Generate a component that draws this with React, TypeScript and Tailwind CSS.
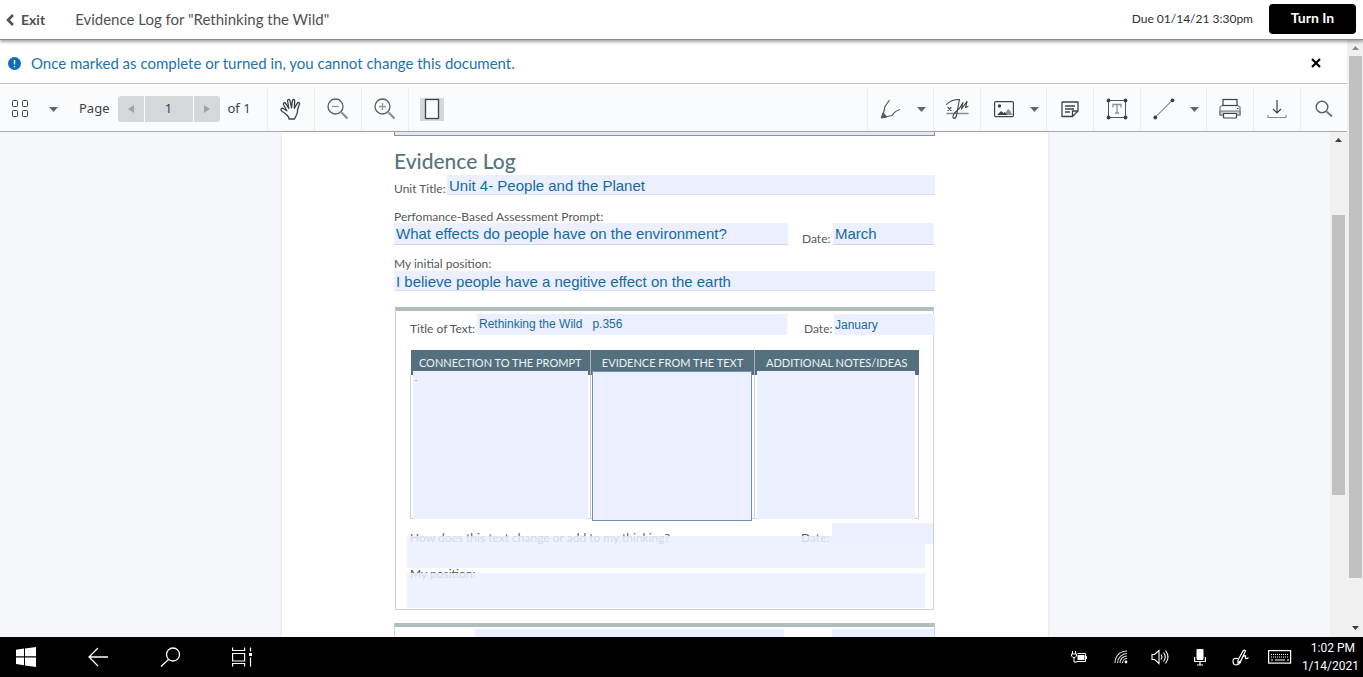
import { useState } from 'react';
import type { ReactNode } from 'react';

const columns = ['CONNECTION TO THE PROMPT', 'EVIDENCE FROM THE TEXT', 'ADDITIONAL NOTES/IDEAS'];

const columnWidths = ['w-[180px]', 'w-[164px]', 'w-[164px]'];

const boxStyles = [
  'ml-0.5 w-[175px] h-[148px] bg-[#ecf0fe]',
  'ml-px w-[160px] h-[150px] border border-[#6f8fb5] bg-[#ecf0fe]',
  'ml-0.5 w-[158px] h-[148px] bg-[#ecf0fe]',
];

const fieldBase = 'block min-w-0 rounded-none bg-[#ecf0fe] text-[#156aa3] outline-none font-["Liberation_Sans",Arial,sans-serif]';
const labelBase = 'shrink-0 whitespace-nowrap text-xs leading-3 text-[#55585a]';

function Tool({ label, children, menu = false }: { label: string; children: ReactNode; menu?: boolean }) {
  return (
    <div className={`flex h-full shrink-0 border-l border-[#eceef1] ${menu ? 'w-[66px]' : 'w-[47px]'}`}>
      <button aria-label={label} className="flex h-full w-[46px] shrink-0 items-center justify-center text-[#3f4145]">
        {children}
      </button>
      {menu && (
        <button aria-label={`${label} options`} className="flex h-full flex-1 items-center pl-[3px]">
          <Caret />
        </button>
      )}
    </div>
  );
}

function Caret() {
  return (
    <svg width="9" height="5" viewBox="0 0 9 5" fill="#63656a">
      <path d="M0 0h9L4.500 5z" />
    </svg>
  );
}

function ScrollArrow({ down = false, className = '' }: { down?: boolean; className?: string }) {
  return (
    <svg width="7" height="4" viewBox="0 0 7 4" fill="currentColor" className={className}>
      <path d={down ? 'M0 0h7L3.500 4z' : 'M0 4h7L3.500 0z'} />
    </svg>
  );
}

function Header() {
  return (
    <header className="relative z-10 flex h-10 shrink-0 items-center border-b border-[#8d8d8d] bg-white pl-1.5 pr-[7px] text-[#4f5154] shadow-[0_2px_3px_rgba(0,0,0,0.35)]">
      <button className="flex items-center gap-[7px] text-sm font-bold">
        <svg width="8" height="12" viewBox="0 0 8 12" fill="none" stroke="currentColor" strokeWidth="2.600">
          <path d="M7 1L2 6l5 5" />
        </svg>
        Exit
      </button>
      <h1 className="ml-[30px] text-[15px]">Evidence Log for "Rethinking the Wild"</h1>
      <span className="ml-auto pb-0.5 text-xs text-[#2d2f31]">Due 01/14/21 3:30pm</span>
      <button className="mb-0.5 ml-4 h-[30px] w-[87px] rounded-sm bg-black pb-0.5 text-sm font-bold text-white">Turn In</button>
    </header>
  );
}

function Banner({ onClose }: { onClose: () => void }) {
  return (
    <div className="flex h-11 shrink-0 items-center border-b border-[#c3c5c8] bg-white pl-2 pr-[25px] pt-[3px]">
      <svg width="13" height="13" viewBox="0 0 13 13">
        <circle cx="6.500" cy="6.500" r="6.500" fill="#0f6cb6" />
        <path d="M6.500 3v4.500M6.500 9v1.300" stroke="#fff" strokeWidth="1.300" />
      </svg>
      <p className="ml-2.5 text-[15px] text-[#1e73ac]">Once marked as complete or turned in, you cannot change this document.</p>
      <button aria-label="Dismiss" onClick={onClose} className="ml-auto p-px text-black">
        <svg width="10" height="10" viewBox="0 0 10 10" stroke="currentColor" strokeWidth="2.200">
          <path d="M1 1l8 8M9 1L1 9" />
        </svg>
      </button>
    </div>
  );
}

function Toolbar() {
  return (
    <div className='flex h-12 shrink-0 items-center border-b border-[#a9abae] bg-[#fafbfd] pt-[3px] font-["Noto_Sans",sans-serif] text-[13px] text-[#404347]'>
      <button aria-label="Sidebar" className="ml-[11px] flex items-center gap-5 text-[#3f4145]">
        <svg width="18" height="20" viewBox="0 0 18 20" fill="none" stroke="currentColor">
          <rect x="1.500" y="1.500" width="5" height="6" rx="0.800" />
          <rect x="11.500" y="1.500" width="5" height="6" rx="0.800" />
          <rect x="1.500" y="11.500" width="5" height="6" rx="0.800" />
          <rect x="11.500" y="11.500" width="5" height="6" rx="0.800" />
        </svg>
        <Caret />
      </button>
      <label htmlFor="page" className="ml-[21px]">Page</label>
      <div className="ml-2 flex h-[26px] gap-px overflow-hidden rounded-[3px] text-[#a0a2a5]">
        <button aria-label="Previous page" className="flex w-[26px] items-center justify-center bg-[#d6d7da]">
          <svg width="6" height="8" viewBox="0 0 6 8" fill="currentColor"><path d="M6 0v8L0 4z" /></svg>
        </button>
        <input id="page" defaultValue="1" className="w-12 bg-[#d6d7da] text-center text-[#404347] outline-none" />
        <button aria-label="Next page" className="flex w-[26px] items-center justify-center bg-[#d6d7da]">
          <svg width="6" height="8" viewBox="0 0 6 8" fill="currentColor"><path d="M0 0v8l6-4z" /></svg>
        </button>
      </div>
      <span className="ml-2 w-[39px]">of 1</span>
      <Tool label="Pan">
        <svg width="22" height="22" viewBox="0 0 22 22" fill="none" stroke="currentColor" strokeWidth="1.300" strokeLinecap="round" strokeLinejoin="round">
          <path d="M6.500 16.500L2 13.300C-.2 11.500 1.700 9.500 3.600 10.700L6.800 12.800 3.600 6.800C2.800 5 4.900 4 5.800 5.700L8.800 10.500 7.600 3C7.400 1 9.600.8 10 2.700L11.500 9.800 12.400 2.800C12.700.8 14.900 1.200 14.700 3.100L14.300 10.300 17.200 5.300C18.200 3.700 20.100 4.700 19.400 6.400L17.800 11C17 14 18 15.500 16 18L14.500 21H9L8.500 19z" />
        </svg>
      </Tool>
      <Tool label="Zoom out">
        <svg width="22" height="22" viewBox="0 0 22 22" fill="none" stroke="#5c5e62" strokeWidth="1.300">
          <circle cx="8.500" cy="8.500" r="7.500" />
          <path d="M5 8.500h7" stroke="#97999d" />
          <path d="M14.500 14.500l6 6" strokeWidth="2" stroke="#85878b" />
        </svg>
      </Tool>
      <Tool label="Zoom in">
        <svg width="22" height="22" viewBox="0 0 22 22" fill="none" stroke="#5c5e62" strokeWidth="1.300">
          <circle cx="8.500" cy="8.500" r="7.500" />
          <path d="M5 8.500h7M8.500 5v7" stroke="#97999d" />
          <path d="M14.500 14.500l6 6" strokeWidth="2" stroke="#85878b" />
        </svg>
      </Tool>
      <Tool label="Fit page">
        <svg width="24" height="23" viewBox="0 0 24 23">
          <path d="M0 0h24v23H0z" fill="#d6d7da" />
          <rect x="5.500" y="1.500" width="13" height="19" fill="#fafbfd" stroke="#3f4145" strokeWidth="1.300" />
        </svg>
      </Tool>
      <div className="flex-1" />
      <Tool label="Draw" menu>
        <svg width="20" height="20" viewBox="0 0 20 20" fill="none" stroke="#55575b" strokeWidth="1.200" strokeLinejoin="round">
          <path d="M8.500 1L4 7.500 1.500 18.500 11 16.500C13 13.500 15.500 11.500 19 10.500" />
          <path d="M.5 19l1.500-5 3.500 4z" fill="#55575b" />
        </svg>
      </Tool>
      <Tool label="Signature">
        <svg width="24" height="22" viewBox="0 0 24 22" fill="none" stroke="currentColor" strokeWidth="1.100" strokeLinecap="round" strokeLinejoin="round">
          <path d="M2 15.500h21" stroke="#898b8f" strokeWidth="1.500" />
          <path d="M3 9.500l3 3M6 9.500L3 12.500" />
          <path d="M1.500 6.500C5 2.500 9 1.500 14.500 1.500 13 8 12.500 13 11.500 17.500 10.500 21.500 7.500 21 8 18 8.500 14 13 13 15 9.500L18 4.500 16.500 11 22 3.500 20.500 9.500 23 8.500" />
        </svg>
      </Tool>
      <Tool label="Image" menu>
        <svg width="20" height="18" viewBox="0 0 20 18">
          <rect x="0.600" y="1.600" width="18.800" height="15" rx="1" fill="none" stroke="currentColor" strokeWidth="1.200" />
          <circle cx="5.500" cy="6" r="1.700" fill="currentColor" />
          <path d="M10 15l4-6 2 1.500 2.500 4.500z" fill="#8e9094" />
          <path d="M3 15l4-4 2.500 2 1-1 3 3z" fill="currentColor" />
        </svg>
      </Tool>
      <Tool label="Note">
        <svg width="18" height="18" viewBox="0 0 18 18" fill="none" stroke="currentColor" strokeWidth="1.300">
          <path d="M1 2h16v9l-5.500 5.500H1z" strokeLinejoin="round" />
          <path d="M17 11h-5.500v5.500M4 6h10M4 9h9M4 12h5" />
        </svg>
      </Tool>
      <Tool label="Text">
        <svg width="22" height="22" viewBox="0 0 22 22" fill="currentColor">
          <path d="M2.500 2.500h17v17h-17z" fill="none" stroke="currentColor" strokeWidth="0.900" />
          <circle cx="2.500" cy="2.500" r="1.900" />
          <circle cx="19.500" cy="2.500" r="1.900" />
          <circle cx="2.500" cy="19.500" r="1.900" />
          <circle cx="19.500" cy="19.500" r="1.900" />
          <path d="M7 9.500v-3h8v3M11 6.500v8.500M9 15h4" fill="none" stroke="#8e9094" strokeWidth="1.300" />
        </svg>
      </Tool>
      <Tool label="Line" menu>
        <svg width="22" height="22" viewBox="0 0 22 22" fill="currentColor">
          <path d="M2 19.500L19.500 2" stroke="currentColor" strokeWidth="0.900" />
          <circle cx="2.300" cy="19.500" r="1.900" />
          <circle cx="19.500" cy="2.300" r="1.900" />
        </svg>
      </Tool>
      <Tool label="Print">
        <svg width="22" height="22" viewBox="0 0 22 22" fill="#fafbfd" stroke="currentColor" strokeWidth="1.200">
          <path d="M1 17V9l3-2h14l3 2v8z" stroke="#77797d" />
          <path d="M1 13h20v4H1z" fill="#c9cacd" stroke="#77797d" />
          <rect x="4" y="1.500" width="14" height="6" />
          <rect x="4.500" y="15.500" width="13" height="4.500" rx="0.800" />
          <path d="M18 10.500h1.500" />
        </svg>
      </Tool>
      <Tool label="Download">
        <svg width="20" height="20" viewBox="0 0 20 20" fill="none" stroke="currentColor" strokeWidth="1.200">
          <path d="M10 1v13M6 10l4 4 4-4" />
          <path d="M1 16v2.500h18V16" stroke="#898b8f" />
        </svg>
      </Tool>
      <Tool label="Search">
        <svg width="18" height="18" viewBox="0 0 18 18" fill="none" stroke="#5c5e62" strokeWidth="1.400">
          <circle cx="7" cy="7" r="5.800" />
          <path d="M11.500 11.500l5.500 5" strokeWidth="1.900" stroke="#77797d" />
        </svg>
      </Tool>
    </div>
  );
}

function LogCard() {
  return (
    <section className="mt-4 ml-px w-[539px] border border-t-4 border-[#cbd4d8] border-t-[#b0bebe] pt-[3px] pb-px pl-3.5">
      <div className="flex h-[21px] items-end">
        <label htmlFor="text-title" className={`${labelBase} w-[67px]`}>Title of Text:</label>
        <input id="text-title" defaultValue="Rethinking the Wild   p.356" className={`${fieldBase} h-[21px] w-[310px] shrink-0 px-0.5 pb-0.5 text-xs whitespace-pre`} />
        <label htmlFor="text-date" className={`${labelBase} ml-[17px] w-[30px]`}>Date:</label>
        <input id="text-date" defaultValue="January" className={`${fieldBase} h-[21px] w-[101px] shrink-0 px-px text-xs`} />
      </div>
      <table className="mt-[15px] w-[508px] table-fixed border-collapse">
        <thead>
          <tr>
            {columns.map((name, i) => (
              <th key={name} scope="col" className={`${columnWidths[i]} h-[25px] border-r border-[#a9b8bf] bg-[#54707f] p-0 text-[11px] leading-4 font-normal whitespace-nowrap text-[#edf2f4] last:border-r-0`}>
                {name}
              </th>
            ))}
          </tr>
        </thead>
        <tbody>
          <tr>
            {columns.map((name, i) => (
              <td key={name} className="h-[143px] border border-t-0 border-[#ccd2d8] p-0 align-top">
                <textarea aria-label={name} defaultValue={i === 0 ? '.' : ''} className={`${boxStyles[i]} relative -mt-1 -mb-1 block resize-none pl-0.5 text-[8px] leading-[14px] text-[#55585a] outline-none`} />
              </td>
            ))}
          </tr>
        </tbody>
      </table>
      <div className="mt-1 flex h-[21px] items-end">
        <label htmlFor="change" className={`${labelBase} w-[391px]`}>How does this text change or add to my thinking?</label>
        <label htmlFor="change-date" className={`${labelBase} w-[31px]`}>Date:</label>
        <input id="change-date" className={`${fieldBase} h-[21px] w-[101px] shrink-0`} />
      </div>
      <textarea id="change" className="relative -mt-2 -ml-[3px] block h-8 w-[518px] resize-none bg-[#ebeefe]/85 outline-none" />
      <label htmlFor="position" className={`${labelBase} block`}>My position:</label>
      <textarea id="position" className="relative -mt-[7px] -ml-[3px] block h-[35px] w-[518px] resize-none bg-[#ebeefe]/85 outline-none" />
    </section>
  );
}

function Document() {
  return (
    <main className='mx-auto h-full w-[766px] shrink-0 overflow-hidden bg-white px-28 shadow-[0_0_3px_rgba(0,0,0,0.12)] font-[Lato,sans-serif]'>
      <div className="h-1 w-[541px] border border-t-0 border-[#8c929b] bg-[#e4e8f5]" />
      <h2 className="mt-[11px] h-7 text-[21px] leading-7 font-medium text-[#56757f]">Evidence Log</h2>
      <div className="flex h-5 w-[541px] items-end">
        <label htmlFor="unit" className={`${labelBase} w-[53px]`}>Unit Title:</label>
        <input id="unit" defaultValue="Unit 4- People and the Planet" className={`${fieldBase} h-5 flex-1 border-b border-[#dcdff0] px-0.5 pt-[3px] text-[15px]`} />
      </div>
      <label htmlFor="prompt" className={`${labelBase} mt-4 block`}>Perfomance-Based Assessment Prompt:</label>
      <div className="flex h-[22px] w-[541px] items-end">
        <input id="prompt" defaultValue="What effects do people have on the environment?" className={`${fieldBase} h-[22px] w-[394px] border-b border-[#d0d4e4] px-0.5 pt-0.5 text-[15px]`} />
        <label htmlFor="prompt-date" className={`${labelBase} ml-3.5 w-[31px]`}>Date:</label>
        <input id="prompt-date" defaultValue="March" className={`${fieldBase} h-[22px] w-[101px] border-b border-[#d0d4e4] px-0.5 pt-0.5 text-[15px]`} />
      </div>
      <label htmlFor="initial" className={`${labelBase} mt-[13px] block`}>My initial position:</label>
      <input id="initial" defaultValue="I believe people have a negitive effect on the earth" className={`${fieldBase} mt-px h-5 w-[541px] border-b border-[#dcdff0] px-0.5 pt-[3px] text-[15px]`} />
      <LogCard />
      <section className="mt-[13px] flex h-10 w-[541px] border border-t-4 border-[#cbd4d8] border-t-[#b0bebe] pt-0.5 pl-20">
        <input aria-label="Title of Text" className={`${fieldBase} h-5 w-[309px]`} />
        <input aria-label="Date" className={`${fieldBase} ml-12 h-5 flex-1`} />
      </section>
    </main>
  );
}

function Taskbar() {
  return (
    <footer className='flex h-10 shrink-0 items-center bg-black text-white'>
      <button aria-label="Start" className="ml-4">
        <svg width="20" height="20" viewBox="0 0 20 20" fill="currentColor">
          <path d="M0 2.800L8 1.600V9.300H0zM9 1.500L20 0v9.300H9zM0 10.400h8v7.800L0 17zM9 10.400h11V20L9 18.400z" />
        </svg>
      </button>
      <button aria-label="Back" className="ml-[52px]">
        <svg width="20" height="20" viewBox="0 0 20 20" fill="none" stroke="currentColor" strokeWidth="1.300">
          <path d="M20 10H1M10 1L1 10l9 9" />
        </svg>
      </button>
      <button aria-label="Search" className="ml-[52px]">
        <svg width="21" height="20" viewBox="0 0 21 20" fill="none" stroke="currentColor" strokeWidth="1.300">
          <circle cx="13" cy="7.500" r="6.500" />
          <path d="M8.500 12.500L1 19.500" />
        </svg>
      </button>
      <button aria-label="Task view" className="ml-[51px]">
        <svg width="20" height="20" viewBox="0 0 20 20" fill="none" stroke="currentColor" strokeWidth="1.200">
          <path d="M.6.500v3h12v-3M.6 19.500v-3h12v3M.6 6.500h12v7.500H.6zM18.500.500v4M18.500 10.500v9" />
          <path d="M17 6h3v3h-3z" fill="currentColor" stroke="none" />
        </svg>
      </button>
      <div className="ml-auto flex items-center">
        <svg width="17" height="12" viewBox="0 0 17 12" fill="none" stroke="currentColor">
          <path d="M6.500 2.500h8v8h-9" />
          <path d="M6.500 4h7v5h-7z" fill="currentColor" stroke="none" />
          <path d="M15.500 5v3M1.500 0v3M4.500 0v3M.5 3h5v2L4 6.500H2L.5 5zM3 6.500V11h3" />
        </svg>
        <svg className="ml-[26px]" width="14" height="14" viewBox="0 0 14 14" fill="none" stroke="currentColor" strokeWidth="1.100">
          <path d="M1 13C1 6 6 1 13 1M3.500 13C3.500 8 8 3.500 13 3.500M6 13c0-4 3-7 7-7M8.500 13C8.500 10.500 10.500 8.500 13 8.500" opacity="0.850" />
          <circle cx="12" cy="12" r="1.400" fill="currentColor" stroke="none" />
        </svg>
        <svg className="ml-[23px]" width="18" height="16" viewBox="0 0 18 16" fill="none" stroke="currentColor" strokeWidth="1.100">
          <path d="M1 5.500h2.500L8 1.500v13l-4.500-4H1zM10 5.500q1.800 2.500 0 5M12.500 3.500q3.500 4.500 0 9M14.500 1.500q5 6.500 0 13" />
        </svg>
        <svg className="ml-[25px]" width="12" height="17" viewBox="0 0 12 17" fill="none" stroke="currentColor" strokeWidth="1.200">
          <rect x="2.500" y="0" width="7" height="11" rx="1" fill="currentColor" stroke="none" />
          <path d="M.6 8v4.500h10.800V8M6 12.500V16M3 16h6" />
        </svg>
        <svg className="ml-[26px]" width="17" height="17" viewBox="0 0 17 17" fill="none" stroke="currentColor" strokeWidth="1.200">
          <path d="M6 11L11 2Q12.500.2 13.500 2L9 11.500 6 14zM6 9.500Q.6 8.500 1 12.500 1.200 16 4 16 8.500 15.500 9 11.500M11.500 7.500Q14 5.500 13.500 8 13 11 16.500 8.500" />
        </svg>
        <svg className="ml-[19px]" width="24" height="14" viewBox="0 0 24 14" fill="none" stroke="currentColor">
          <rect x="0.600" y="0.600" width="22" height="12.500" strokeWidth="1.200" />
          <path d="M3 4.500h18M3 7h18" strokeDasharray="1 1" />
          <path d="M3 10h2M7 10h10M19 10h2" />
        </svg>
        <div className="mr-1 ml-2.5 text-right text-xs leading-[18px] font-[Roboto,sans-serif]">
          <div className="pr-1">1:02 PM</div>
          <div>1/14/2021</div>
        </div>
      </div>
    </footer>
  );
}

export default function App() {
  const [showBanner, setShowBanner] = useState(true);

  return (
    <div className="flex h-screen flex-col overflow-hidden bg-white font-[Lato,sans-serif]">
      <Header />
      <div className="flex min-h-0 flex-1">
        <div className="flex min-w-0 flex-1 flex-col">
          {showBanner && <Banner onClose={() => setShowBanner(false)} />}
          <Toolbar />
          <div className="flex min-h-0 flex-1 bg-[#f5f7fa]">
            <div className="flex min-w-0 flex-1">
              <Document />
            </div>
            <div className="flex w-[17px] flex-col items-center bg-[#f0f0f1] text-[#404040]">
              <ScrollArrow className="mt-1.5" />
              <div className="mt-[73px] h-[280px] w-[13px] bg-[#c1c1c1]" />
            </div>
          </div>
        </div>
        <div className="flex w-4 flex-col items-center bg-[#f0f0f1] text-[#404040]">
          <ScrollArrow className="mt-1.5 shrink-0 text-[#8a8a8a]" />
          <div className="mt-1.5 mb-12 w-[13px] flex-1 bg-[#c1c1c1]" />
          <ScrollArrow down className="mb-[7px] shrink-0" />
        </div>
      </div>
      <Taskbar />
    </div>
  );
}
